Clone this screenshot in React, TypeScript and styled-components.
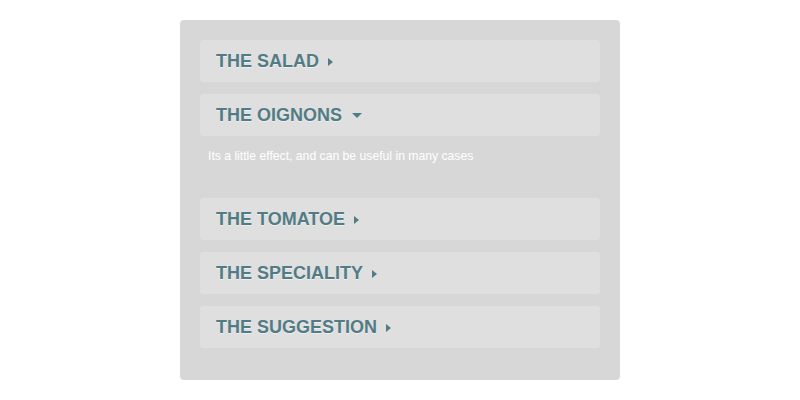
import styled, { createGlobalStyle } from "styled-components";

const Global = createGlobalStyle`
    body {
        margin: 0;
        background: #ffffff;
        font-family: "Liberation Sans", Arial, sans-serif;
    }
`

const items = [
    { title: "THE SALAD", open: false },
    { title: "THE OIGNONS", open: true, text: "Its a little effect, and can be useful in many cases" },
    { title: "THE TOMATOE", open: false },
    { title: "THE SPECIALITY", open: false },
    { title: "THE SUGGESTION", open: false },
]

function App() {
    return (
        <>
            <Global />
            <Page>
                <Accordion>
                    {items.map((item) => (
                        <Section key={item.title}>
                            <Header>
                                <Title>{item.title}</Title>
                                <Caret $open={item.open} />
                            </Header>
                            {item.open && <Content>{item.text}</Content>}
                        </Section>
                    ))}
                </Accordion>
            </Page>
        </>
    )
}

const Page = styled.div`
    display: flex;
    justify-content: center;
    padding-top: 20px;
`

const Accordion = styled.div`
    width: 400px;
    padding: 20px;
    background-color: #d7d7d7;
    border-radius: 4px;
    display: flex;
    flex-direction: column;
`

const Section = styled.div`
    margin-bottom: 12px;
`

const Header = styled.div`
    display: flex;
    align-items: center;
    height: 42px;
    padding-left: 16px;
    background-color: #dfdfdf;
    border-radius: 3px;
`

const Title = styled.span`
    font-size: 18px;
    font-weight: bold;
    color: #527b85;
    text-shadow: 0 1px 0 rgba(255, 255, 255, 0.5);
`

const Caret = styled.span<{ $open: boolean }>`
    width: 0;
    height: 0;
    ${(p) => p.$open
        ? `margin-left: 10px;
           border-left: 5px solid transparent;
           border-right: 5px solid transparent;
           border-top: 5px solid #527b85;`
        : `margin-left: 9px;
           margin-top: 2px;
           border-top: 4.5px solid transparent;
           border-bottom: 4.5px solid transparent;
           border-left: 5px solid #527b85;`}
`

const Content = styled.p`
    margin: 0;
    padding: 13px 8px 22px;
    font-size: 12.2px;
    line-height: 15px;
    color: #ffffff;
`

export default App
